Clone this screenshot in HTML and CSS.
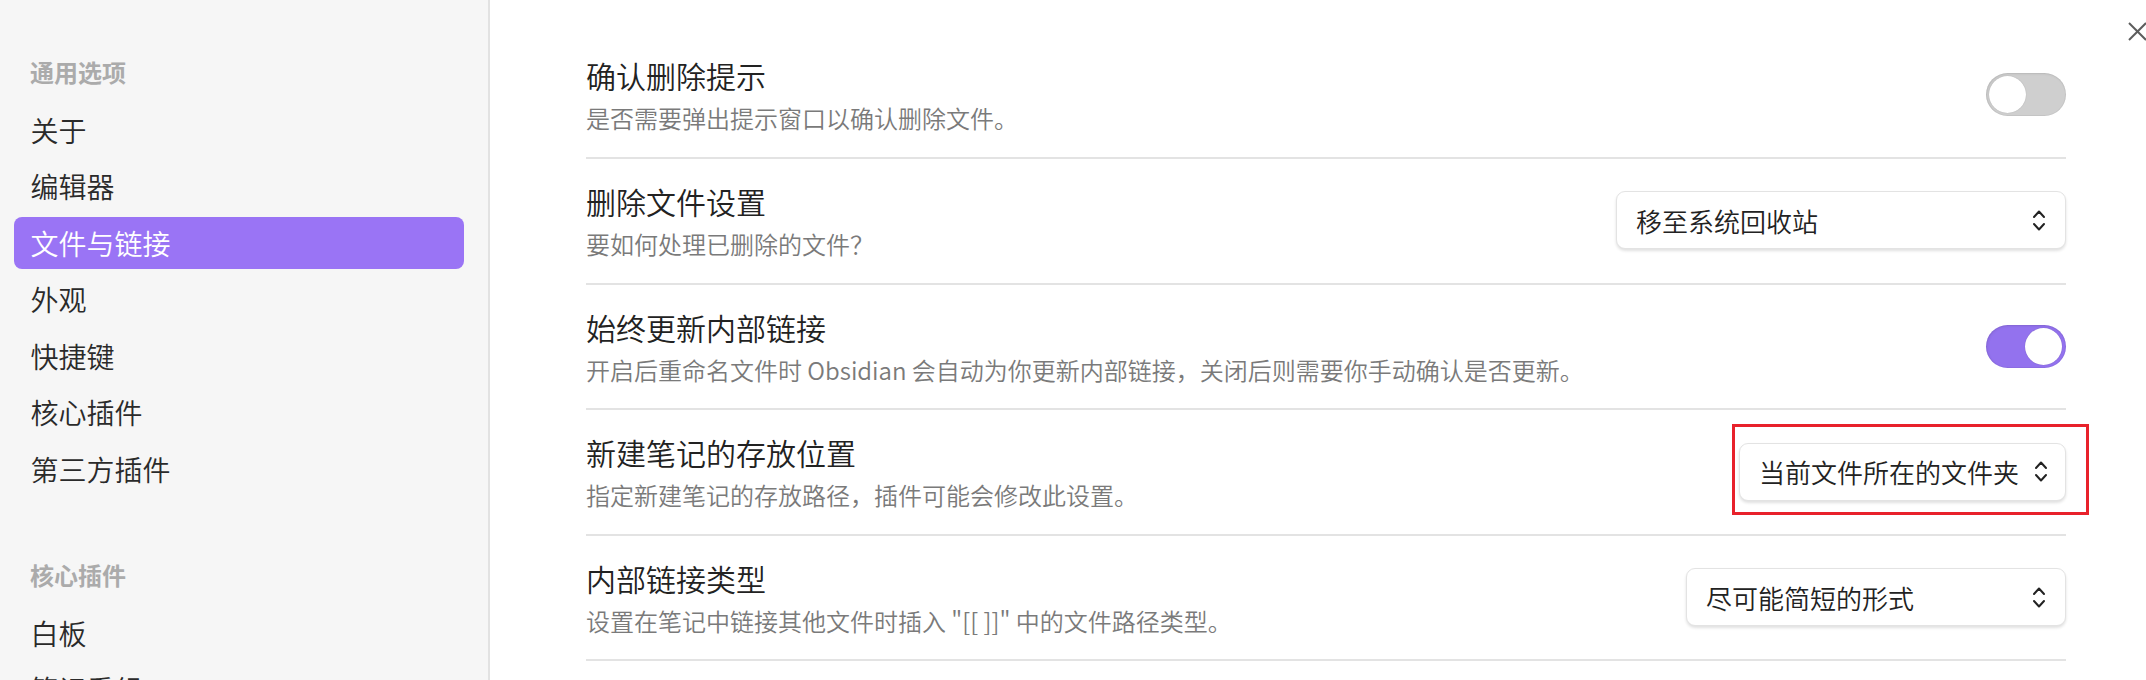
FILE: index.html
```html
<!DOCTYPE html>
<html lang="zh-CN">
<head>
<meta charset="utf-8">
<title>设置 - 文件与链接</title>
<link rel="stylesheet" href="styles.css">
</head>
<body>
<div class="modal">
  <nav class="sidebar">
    <div class="nav-group">
      <div class="nav-header">通用选项</div>
      <div class="nav-items">
        <div class="nav-item">关于</div>
        <div class="nav-item">编辑器</div>
        <div class="nav-item is-active">文件与链接</div>
        <div class="nav-item">外观</div>
        <div class="nav-item">快捷键</div>
        <div class="nav-item">核心插件</div>
        <div class="nav-item">第三方插件</div>
      </div>
    </div>
    <div class="nav-group">
      <div class="nav-header">核心插件</div>
      <div class="nav-items">
        <div class="nav-item">白板</div>
        <div class="nav-item">笔记重组</div>
      </div>
    </div>
  </nav>

  <main class="content">
    <div class="setting">
      <div class="info">
        <div class="name">确认删除提示</div>
        <div class="desc">是否需要弹出提示窗口以确认删除文件。</div>
      </div>
      <div class="control">
        <div class="toggle"><span class="knob"></span></div>
      </div>
    </div>

    <div class="setting">
      <div class="info">
        <div class="name">删除文件设置</div>
        <div class="desc">要如何处理已删除的文件？</div>
      </div>
      <div class="control">
        <div class="dropdown dd-trash">
          <span class="dd-text">移至系统回收站</span>
          <svg class="chevron" viewBox="0 0 12 21" width="12" height="21"><polyline points="1,7 6,1.5 11,7"/><polyline points="1,14 6,19.5 11,14"/></svg>
        </div>
      </div>
    </div>

    <div class="setting">
      <div class="info">
        <div class="name">始终更新内部链接</div>
        <div class="desc">开启后重命名文件时 Obsidian 会自动为你更新内部链接，关闭后则需要你手动确认是否更新。</div>
      </div>
      <div class="control">
        <div class="toggle is-on"><span class="knob"></span></div>
      </div>
    </div>

    <div class="setting">
      <div class="info">
        <div class="name">新建笔记的存放位置</div>
        <div class="desc">指定新建笔记的存放路径，插件可能会修改此设置。</div>
      </div>
      <div class="control">
        <div class="dropdown-wrap">
          <div class="dropdown dd-folder">
            <span class="dd-text">当前文件所在的文件夹</span>
            <svg class="chevron" viewBox="0 0 12 21" width="12" height="21"><polyline points="1,7 6,1.5 11,7"/><polyline points="1,14 6,19.5 11,14"/></svg>
          </div>
          <div class="highlight"></div>
        </div>
      </div>
    </div>

    <div class="setting">
      <div class="info">
        <div class="name">内部链接类型</div>
        <div class="desc">设置在笔记中链接其他文件时插入 "[[ ]]" 中的文件路径类型。</div>
      </div>
      <div class="control">
        <div class="dropdown dd-link">
          <span class="dd-text">尽可能简短的形式</span>
          <svg class="chevron" viewBox="0 0 12 21" width="12" height="21"><polyline points="1,7 6,1.5 11,7"/><polyline points="1,14 6,19.5 11,14"/></svg>
        </div>
      </div>
    </div>
  </main>

  <button class="close" aria-label="关闭">
    <svg viewBox="0 0 21 21" width="21" height="21"><line x1="2" y1="2" x2="19" y2="19"/><line x1="19" y1="2" x2="2" y2="19"/></svg>
  </button>
</div>
</body>
</html>
```

FILE: styles.css
```css
html, body {
  margin: 0;
  padding: 0;
  width: 2146px;
  height: 680px;
  overflow: hidden;
  background: #ffffff;
}

body {
  font-family: "Noto Sans CJK SC", "Noto Sans", sans-serif;
  font-weight: 350;
  color: #222222;
}

.modal {
  position: relative;
  display: flex;
  width: 2146px;
  height: 680px;
  overflow: hidden;
}

/* Sidebar */
.sidebar {
  flex: 0 0 490px;
  box-sizing: border-box;
  background: #f6f6f6;
  border-right: 2px solid #e2e2e2;
  padding: 56px 24px 0 14px;
}

.nav-group + .nav-group {
  margin-top: 64px;
}

.nav-header {
  font-size: 24px;
  line-height: 32px;
  font-weight: 600;
  color: #ababab;
  padding-left: 16px;
  margin-bottom: 16px;
}

.nav-items {
  display: flex;
  flex-direction: column;
  gap: 4.45px;
}

.nav-item {
  height: 52px;
  display: flex;
  align-items: center;
  padding: 0 16.5px;
  font-size: 28px;
  color: #2a2a2a;
  border-radius: 8px;
}

.nav-item.is-active {
  background: #9a74f5;
  color: #ffffff;
}

/* Content */
.content {
  flex: 1;
  padding: 33.4px 80px 0 96px;
  min-width: 0;
}

.setting {
  display: flex;
  align-items: center;
  padding: 22px 0 22.6px;
  border-bottom: 2px solid #e3e3e3;
}

.info {
  flex: 1;
  min-width: 0;
}

.name {
  font-size: 30px;
  line-height: 40px;
  color: #222222;
}

.desc {
  font-size: 24px;
  line-height: 32px;
  color: #7a7a7a;
  margin-top: 7px;
}

.control {
  display: flex;
  align-items: center;
  justify-content: flex-end;
  margin-left: 24px;
}

/* Toggle */
.toggle {
  position: relative;
  width: 80px;
  height: 43px;
  border-radius: 22px;
  background: #cfcfcf;
  box-shadow: inset 0 0 0 1px rgba(0, 0, 0, 0.04), inset 1px 1px 3px rgba(0, 0, 0, 0.08);
}

.toggle .knob {
  position: absolute;
  top: 3px;
  left: 3px;
  width: 37px;
  height: 37px;
  border-radius: 50%;
  background: #ffffff;
  box-shadow: 0 0 1px rgba(0, 0, 0, 0.25);
}

.toggle.is-on {
  background: #9372ee;
}

.toggle.is-on .knob {
  left: 39px;
}

/* Dropdown */
.dropdown {
  display: flex;
  align-items: center;
  justify-content: space-between;
  box-sizing: border-box;
  height: 58px;
  padding: 0 20px 0 19px;
  background: #ffffff;
  border: 1px solid #e3e3e3;
  border-radius: 9px;
  box-shadow: 0 2px 3px rgba(0, 0, 0, 0.12);
}

.dd-text {
  font-size: 26px;
  color: #222222;
  white-space: nowrap;
}

.chevron {
  flex: 0 0 12px;
  margin-left: 16px;
}

.chevron polyline {
  fill: none;
  stroke: #222222;
  stroke-width: 2;
  stroke-linecap: round;
  stroke-linejoin: round;
}

.dd-trash { width: 450px; }
.dd-folder { width: 327px; }
.dd-link { width: 380px; }

.dropdown-wrap {
  position: relative;
}

.highlight {
  position: absolute;
  left: -7px;
  right: -23px;
  top: -19px;
  bottom: -14px;
  border: 3px solid #e8212b;
  pointer-events: none;
}

/* Close button */
.close {
  position: absolute;
  top: 21px;
  right: -2px;
  width: 21px;
  height: 21px;
  padding: 0;
  border: 0;
  background: transparent;
}

.close svg {
  display: block;
}

.close line {
  stroke: #5c5c5c;
  stroke-width: 2;
}
```
